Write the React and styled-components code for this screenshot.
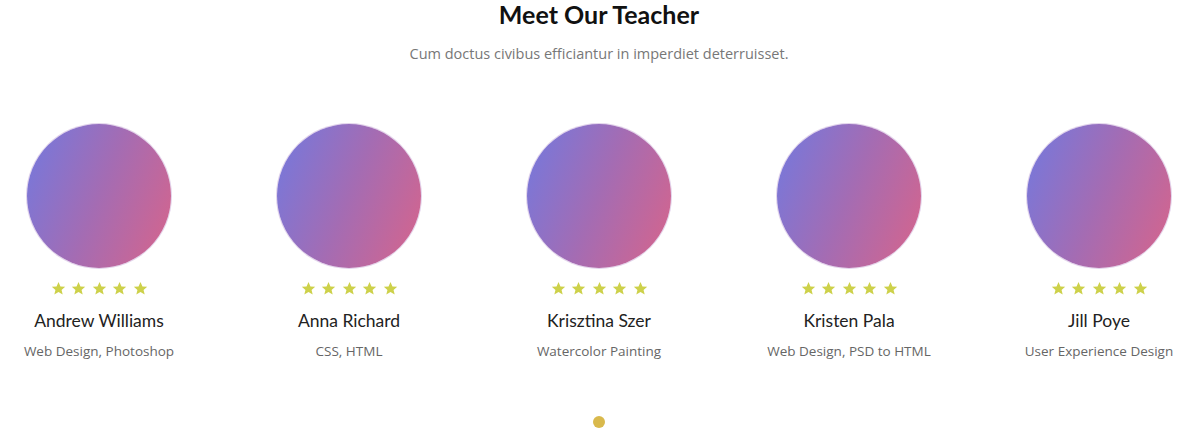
import styled, { createGlobalStyle } from "styled-components";

const GlobalStyle = createGlobalStyle`
  body {
    margin: 0;
    background: #fff;
    font-family: "Lato", "Open Sans", sans-serif;
  }
`;

const teachers = [
  { name: "Andrew Williams", role: "Web Design, Photoshop" },
  { name: "Anna Richard", role: "CSS, HTML" },
  { name: "Krisztina Szer", role: "Watercolor Painting" },
  { name: "Kristen Pala", role: "Web Design, PSD to HTML" },
  { name: "Jill Poye", role: "User Experience Design" },
];

const Section = styled.section`
  width: 1198px;
  height: 447px;
  display: flex;
  flex-direction: column;
  align-items: center;
`;

const Title = styled.h2`
  margin: 0;
  font-family: "Lato", sans-serif;
  font-weight: 700;
  font-size: 25px;
  line-height: 28px;
  color: #111;
`;

const Subtitle = styled.p`
  margin: 14px 0 0;
  font-family: "Open Sans", sans-serif;
  font-size: 14.5px;
  line-height: 24px;
  color: #777;
`;

const Grid = styled.div`
  width: 100%;
  margin-top: 58px;
  display: grid;
  grid-template-columns: repeat(5, 1fr);
  column-gap: 52px;
`;

const Card = styled.div`
  display: flex;
  flex-direction: column;
  align-items: center;
`;

const Avatar = styled.div`
  width: 144px;
  height: 144px;
  border-radius: 50%;
  background: linear-gradient(112deg, #7279df 0%, #a46cb3 50%, #d8648a 100%);
  box-shadow: 0 0 0 1px rgba(160, 110, 190, 0.3);
`;

const Stars = styled.div`
  display: flex;
  gap: 5.5px;
  margin-top: 13px;
  height: 15px;
`;

const Name = styled.h3`
  margin: 14px 0 0;
  font-family: "Lato", sans-serif;
  font-weight: 400;
  font-size: 17.5px;
  line-height: 22px;
  color: #222;
`;

const Role = styled.p`
  margin: 9px 0 0;
  font-family: "Open Sans", sans-serif;
  font-size: 13.5px;
  line-height: 20px;
  color: #666;
`;

const Dot = styled.span`
  margin-top: 55px;
  width: 12px;
  height: 12px;
  border-radius: 50%;
  background: #d9b94c;
`;

function Star() {
  return (
    <svg width="15" height="15" viewBox="0 0 24 24">
      <path
        d="M12 1.5l3.1 7.1 7.6.6-5.8 5 1.8 7.5L12 17.7l-6.7 4 1.8-7.5-5.8-5 7.6-.6z"
        fill="#cdd14a"
      />
    </svg>
  );
}

export default function App() {
  return (
    <>
      <GlobalStyle />
      <Section>
        <Title>Meet Our Teacher</Title>
        <Subtitle>Cum doctus civibus efficiantur in imperdiet deterruisset.</Subtitle>
        <Grid>
          {teachers.map((t) => (
            <Card key={t.name}>
              <Avatar />
              <Stars>
                {[0, 1, 2, 3, 4].map((i) => (
                  <Star key={i} />
                ))}
              </Stars>
              <Name>{t.name}</Name>
              <Role>{t.role}</Role>
            </Card>
          ))}
        </Grid>
        <Dot />
      </Section>
    </>
  );
}
